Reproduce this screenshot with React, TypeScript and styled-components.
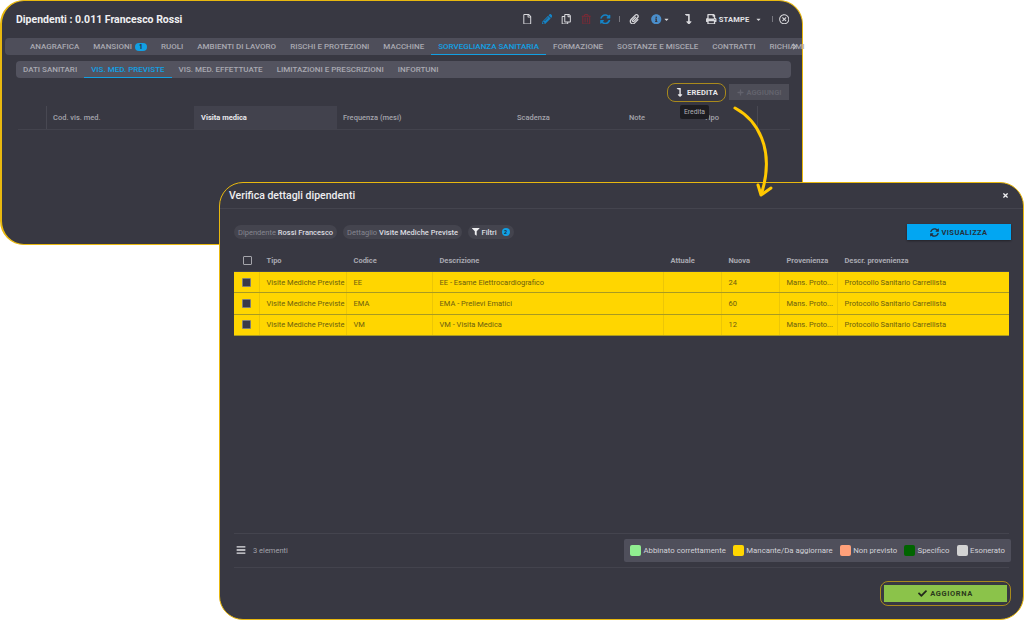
import styled, { createGlobalStyle } from "styled-components";
import {
  FaBars,
  FaCheck,
  FaChevronRight,
  FaFilter,
  FaInfoCircle,
  FaLevelDownAlt,
  FaPaperclip,
  FaPencilAlt,
  FaPlus,
  FaPrint,
  FaRegCopy,
  FaRegFile,
  FaRegTimesCircle,
  FaRegTrashAlt,
  FaSyncAlt,
  FaTimes,
  FaCaretDown,
} from "react-icons/fa";

const GlobalStyle = createGlobalStyle`
  html, body { margin: 0; padding: 0; background: #fff; }
  body { font-family: Roboto, "Liberation Sans", sans-serif; }
`;

const Page = styled.div`
  position: relative;
  width: 1024px;
  height: 620px;
  overflow: hidden;
  background: #fff;
`;

const Window = styled.div<{ $top: number; $left: number; $width: number; $height: number }>`
  position: absolute;
  top: ${(p) => p.$top}px;
  left: ${(p) => p.$left}px;
  width: ${(p) => p.$width}px;
  height: ${(p) => p.$height}px;
  box-sizing: border-box;
  display: flex;
  flex-direction: column;
  background: #383842;
  border: 1.5px solid #e8b80f;
  border-radius: 24px;
  color: #e4e4e8;
`;

const BackWindow = styled(Window)`
  border-left-width: 2px;
  padding: 0 0 0 3px;
`;

const TitleBar = styled.div`
  height: 36px;
  display: flex;
  align-items: center;
  justify-content: space-between;
  padding: 0 13px 0 11px;
  flex: none;
`;

const WindowTitle = styled.div`
  font-size: 10.5px;
  font-weight: 700;
  color: #f0f0f2;
`;

const Tools = styled.div`
  display: flex;
  align-items: center;
  font-size: 10.5px;
`;

const Tool = styled.span<{ $color?: string; $gap?: number }>`
  display: inline-flex;
  align-items: center;
  color: ${(p) => p.$color || "#d8d8dc"};
  margin-left: ${(p) => p.$gap ?? 9}px;
`;

const ToolSep = styled.span<{ $gap?: number }>`
  width: 1px;
  height: 6px;
  background: #77777f;
  margin-left: ${(p) => p.$gap ?? 9}px;
`;

const PrintLabel = styled.span`
  font-size: 7.5px;
  font-weight: 700;
  letter-spacing: 0.2px;
  margin-left: 2px;
  color: #e2e2e6;
`;

const Tabs = styled.div`
  flex: none;
  height: 17px;
  margin-top: 1px;
  display: flex;
  align-items: center;
  background: #4e4e5a;
  border-radius: 4px 0 0 4px;
  padding-left: 25px;
  gap: 14px;
  position: relative;
`;

const Tab = styled.div<{ $active?: boolean }>`
  height: 100%;
  display: flex;
  align-items: center;
  gap: 3px;
  font-size: 8px;
  font-weight: 500;
  white-space: nowrap;
  color: ${(p) => (p.$active ? "#11a0e4" : "#a9a9b1")};
  margin: 0 ${(p) => (p.$active ? "-7px" : "0")};
  padding: 0 ${(p) => (p.$active ? "7px" : "0")};
  box-shadow: ${(p) => (p.$active ? "inset 0 -1px 0 #11a0e4" : "none")};
`;

const Badge = styled.span`
  display: inline-flex;
  align-items: center;
  justify-content: center;
  width: 12px;
  height: 8px;
  border-radius: 4px;
  background: #11a0e4;
  color: #1b2a38;
  font-size: 6.5px;
  font-weight: 700;
`;

const TabMore = styled.span`
  position: absolute;
  right: 4px;
  top: 5px;
  font-size: 7px;
  color: #b5b5bb;
  display: flex;
`;

const SubTabs = styled.div`
  flex: none;
  height: 17px;
  margin: 6px 11px 0 11px;
  display: flex;
  align-items: center;
  background: #53535f;
  border-radius: 4px;
  padding-left: 7px;
  gap: 14px;
`;

const Actions = styled.div`
  flex: none;
  height: 24px;
  margin-top: 2px;
  display: flex;
  align-items: center;
  justify-content: flex-end;
  padding-right: 13px;
  gap: 3px;
`;

const InheritButton = styled.div`
  width: 59px;
  height: 19px;
  box-sizing: border-box;
  border: 1px solid #a98a1c;
  border-radius: 8px;
  display: flex;
  align-items: center;
  justify-content: center;
  gap: 3px;
  font-size: 7.5px;
  font-weight: 700;
  letter-spacing: 0.2px;
  color: #e8e8ea;
`;

const AddButton = styled.div`
  width: 60px;
  height: 16px;
  background: #4d4d57;
  display: flex;
  align-items: center;
  justify-content: center;
  gap: 3px;
  font-size: 7.5px;
  font-weight: 700;
  color: #62626c;
`;

const BackHead = styled.div`
  flex: none;
  margin: 2px 12px 0 13px;
  height: 23px;
  display: grid;
  grid-template-columns: 29px 147px 143px 174px 112px 75px 60px 1fr;
  border-bottom: 1px solid #43434d;
`;

const BackCell = styled.div<{ $selected?: boolean; $line?: boolean }>`
  display: flex;
  align-items: center;
  padding-left: ${(p) => (p.$selected ? 7 : 6)}px;
  font-size: 7.5px;
  font-weight: ${(p) => (p.$selected ? 700 : 500)};
  color: ${(p) => (p.$selected ? "#e8e8ec" : "#a4a4ac")};
  background: ${(p) => (p.$selected ? "#42424d" : "transparent")};
  border-right: ${(p) => (p.$line ? "1px solid #484852" : "none")};
`;

const Tooltip = styled.div`
  position: absolute;
  left: 680px;
  top: 105px;
  width: 29px;
  height: 14px;
  display: flex;
  align-items: center;
  justify-content: center;
  background: #1d1d22;
  border-radius: 2px;
  color: #b0b0b6;
  font-size: 6.8px;
`;

const DialogHead = styled.div`
  flex: none;
  height: 25px;
  display: flex;
  align-items: center;
  justify-content: space-between;
  padding: 0 14px 0 9px;
  border-bottom: 1px solid #44444e;
`;

const DialogTitle = styled.div`
  font-size: 10.5px;
  font-weight: 500;
  color: #eeeef0;
`;

const CloseIcon = styled.span`
  display: flex;
  font-size: 7px;
  color: #f2f2f4;
`;

const DialogBody = styled.div`
  flex: 1;
  display: flex;
  flex-direction: column;
  padding: 15px 12px 0 14px;
`;

const FilterRow = styled.div`
  flex: none;
  height: 16px;
  display: flex;
  align-items: center;
  gap: 6px;
`;

const Chip = styled.div`
  height: 14px;
  display: flex;
  align-items: center;
  gap: 2px;
  padding: 0 4px;
  border-radius: 7px;
  background: #44444e;
  font-size: 7.5px;
  color: #85858f;
  white-space: nowrap;
`;

const ChipValue = styled.span`
  color: #dcdce0;
  font-weight: 500;
`;

const FilterIcon = styled.span`
  display: flex;
  color: #eeeef0;
  font-size: 7.5px;
`;

const ChipBadge = styled(Badge)`
  width: 8px;
  margin-left: 3px;
  font-size: 5.5px;
`;

const ViewButton = styled.div`
  margin-left: auto;
  width: 104px;
  height: 16px;
  display: flex;
  align-items: center;
  justify-content: center;
  gap: 2px;
  background: #02a6f2;
  color: #24303e;
  font-size: 7.5px;
  font-weight: 700;
  letter-spacing: 0.4px;
  box-shadow: 0 1px 2px rgba(0, 0, 0, 0.4);
`;

const Table = styled.div`
  flex: none;
  height: 285px;
  margin-top: 9px;
  border-bottom: 1px solid #44444e;
  margin-right: 2px;
  box-sizing: border-box;
`;

const Row = styled.div<{ $head?: boolean }>`
  display: grid;
  grid-template-columns: 26px 87px 86px 231px 58px 58px 58px 1fr;
  height: ${(p) => (p.$head ? 23 : 21.3)}px;
  box-sizing: border-box;
  background: ${(p) => (p.$head ? "transparent" : "#ffd600")};
  border-bottom: ${(p) => (p.$head ? "1px solid #474751" : "1px solid #a89a22")};
`;

const Cell = styled.div<{ $head?: boolean }>`
  display: flex;
  align-items: center;
  padding-left: 6.5px;
  font-size: 7.5px;
  font-weight: ${(p) => (p.$head ? 700 : 400)};
  color: ${(p) => (p.$head ? "#a9a9b1" : "#6b5d10")};
  border-right: ${(p) => (p.$head ? "none" : "1px solid #ecc606")};
  white-space: nowrap;
  overflow: hidden;

  &:last-child {
    border-right: none;
  }
`;

const CheckCell = styled(Cell)`
  justify-content: center;
  padding-left: 0;
`;

const Check = styled.span<{ $checked?: boolean }>`
  width: 9px;
  height: 9px;
  box-sizing: border-box;
  border-radius: 1px;
  border: 1px solid ${(p) => (p.$checked ? "#7d7d7a" : "#a5a5ab")};
  background: ${(p) => (p.$checked ? "#3a3a48" : "transparent")};
`;

const Footer = styled.div`
  flex: none;
  height: 34px;
  display: flex;
  align-items: center;
  justify-content: space-between;
  border-bottom: 1px solid #43434d;
  margin-right: 2px;
  box-sizing: border-box;
`;

const Count = styled.div`
  display: flex;
  align-items: center;
  gap: 7px;
  padding-left: 2px;
  margin-top: -1px;
  font-size: 7.5px;
  color: #a2a2a9;
`;

const CountIcon = styled.span`
  display: flex;
  font-size: 10px;
  color: #e2e2e6;
`;

const Legend = styled.div`
  width: 387px;
  height: 23px;
  box-sizing: border-box;
  display: flex;
  align-items: center;
  justify-content: space-between;
  padding: 0 6px;
  background: #4f4f5b;
  border-radius: 2px;
  margin-right: -2px;
`;

const LegendItem = styled.div`
  display: flex;
  align-items: center;
  gap: 2.5px;
  font-size: 7.8px;
  color: #d2d2d8;
  white-space: nowrap;
`;

const Swatch = styled.span<{ $color: string }>`
  width: 11px;
  height: 11px;
  border-radius: 2px;
  background: ${(p) => p.$color};
`;

const DialogActions = styled.div`
  flex: 1;
  display: flex;
  justify-content: flex-end;
  padding-top: 13px;
`;

const SaveRing = styled.div`
  width: 131px;
  height: 25px;
  box-sizing: border-box;
  border: 1px solid #a98a1c;
  border-radius: 8px;
  display: flex;
  align-items: center;
  justify-content: center;
`;

const SaveButton = styled.div`
  width: 123px;
  height: 17px;
  display: flex;
  align-items: center;
  justify-content: center;
  gap: 3px;
  background: #8bc34a;
  color: #2c3a1c;
  font-size: 7.5px;
  font-weight: 700;
  letter-spacing: 0.6px;
`;

const SaveIcon = styled.span`
  display: flex;
  font-size: 9px;
  color: #23281c;
`;

const Arrow = styled.svg`
  position: absolute;
  left: 725px;
  top: 100px;
`;

const mainTabs = [
  "ANAGRAFICA",
  "MANSIONI",
  "RUOLI",
  "AMBIENTI DI LAVORO",
  "RISCHI E PROTEZIONI",
  "MACCHINE",
  "SORVEGLIANZA SANITARIA",
  "FORMAZIONE",
  "SOSTANZE E MISCELE",
  "CONTRATTI",
  "RICHIAMI",
];

const subTabs = [
  "DATI SANITARI",
  "VIS. MED. PREVISTE",
  "VIS. MED. EFFETTUATE",
  "LIMITAZIONI E PRESCRIZIONI",
  "INFORTUNI",
];

const backColumns = ["", "Cod. vis. med.", "Visita medica", "Frequenza (mesi)", "Scadenza", "Note", "Tipo", ""];

const columns = ["Tipo", "Codice", "Descrizione", "Attuale", "Nuova", "Provenienza", "Descr. provenienza"];

const rows = [
  { code: "EE", desc: "EE - Esame Elettrocardiografico", next: "24" },
  { code: "EMA", desc: "EMA - Prelievi Ematici", next: "60" },
  { code: "VM", desc: "VM - Visita Medica", next: "12" },
];

const legend = [
  { color: "#90ee90", label: "Abbinato correttamente" },
  { color: "#ffd600", label: "Mancante/Da aggiornare" },
  { color: "#ffa07a", label: "Non previsto" },
  { color: "#006400", label: "Specifico" },
  { color: "#d3d3d3", label: "Esonerato" },
];

export default function App() {
  return (
    <Page>
      <GlobalStyle />
      <BackWindow $top={0} $left={0} $width={803} $height={245}>
        <TitleBar>
          <WindowTitle>Dipendenti : 0.011 Francesco Rossi</WindowTitle>
          <Tools>
            <Tool><FaRegFile /></Tool>
            <Tool $color="#1583c5"><FaPencilAlt /></Tool>
            <Tool><FaRegCopy /></Tool>
            <Tool $color="#7c2a36"><FaRegTrashAlt /></Tool>
            <Tool $color="#1583c5"><FaSyncAlt /></Tool>
            <ToolSep $gap={8} />
            <Tool><FaPaperclip /></Tool>
            <Tool $color="#4a8ecb" $gap={12}><FaInfoCircle /></Tool>
            <Tool $gap={1}><FaCaretDown size={7} /></Tool>
            <Tool $gap={13}><FaLevelDownAlt /></Tool>
            <Tool $gap={13}><FaPrint /><PrintLabel>STAMPE</PrintLabel></Tool>
            <Tool $gap={5}><FaCaretDown size={7} /></Tool>
            <ToolSep $gap={10} />
            <Tool $gap={6}><FaRegTimesCircle /></Tool>
          </Tools>
        </TitleBar>
        <Tabs>
          {mainTabs.map((t) => (
            <Tab key={t} $active={t === "SORVEGLIANZA SANITARIA"}>
              {t}
              {t === "MANSIONI" && <Badge>1</Badge>}
            </Tab>
          ))}
          <TabMore><FaChevronRight /></TabMore>
        </Tabs>
        <SubTabs>
          {subTabs.map((t) => (
            <Tab key={t} $active={t === "VIS. MED. PREVISTE"}>{t}</Tab>
          ))}
        </SubTabs>
        <Actions>
          <InheritButton><FaLevelDownAlt size={9} />EREDITA</InheritButton>
          <AddButton><FaPlus size={7} />AGGIUNGI</AddButton>
        </Actions>
        <BackHead>
          {backColumns.map((c, i) => (
            <BackCell key={i} $selected={c === "Visita medica"} $line={i === 0 || i === 6}>{c}</BackCell>
          ))}
        </BackHead>
      </BackWindow>
      <Tooltip>Eredita</Tooltip>

      <Window $top={182} $left={219} $width={805} $height={438}>
        <DialogHead>
          <DialogTitle>Verifica dettagli dipendenti</DialogTitle>
          <CloseIcon><FaTimes /></CloseIcon>
        </DialogHead>
        <DialogBody>
          <FilterRow>
            <Chip>Dipendente <ChipValue>Rossi Francesco</ChipValue></Chip>
            <Chip>Dettaglio <ChipValue>Visite Mediche Previste</ChipValue></Chip>
            <Chip>
              <FilterIcon><FaFilter /></FilterIcon>
              <ChipValue>Filtri</ChipValue>
              <ChipBadge>2</ChipBadge>
            </Chip>
            <ViewButton><FaSyncAlt size={9} />VISUALIZZA</ViewButton>
          </FilterRow>
          <Table>
            <Row $head>
              <CheckCell $head><Check /></CheckCell>
              {columns.map((c) => (
                <Cell key={c} $head>{c}</Cell>
              ))}
            </Row>
            {rows.map((r) => (
              <Row key={r.code}>
                <CheckCell><Check $checked /></CheckCell>
                <Cell>Visite Mediche Previste</Cell>
                <Cell>{r.code}</Cell>
                <Cell>{r.desc}</Cell>
                <Cell />
                <Cell>{r.next}</Cell>
                <Cell>Mans. Proto...</Cell>
                <Cell>Protocollo Sanitario Carrellista</Cell>
              </Row>
            ))}
          </Table>
          <Footer>
            <Count>
              <CountIcon><FaBars /></CountIcon>
              3 elementi
            </Count>
            <Legend>
              {legend.map((l) => (
                <LegendItem key={l.label}>
                  <Swatch $color={l.color} />
                  {l.label}
                </LegendItem>
              ))}
            </Legend>
          </Footer>
          <DialogActions>
            <SaveRing>
              <SaveButton>
                <SaveIcon><FaCheck /></SaveIcon>
                AGGIORNA
              </SaveButton>
            </SaveRing>
          </DialogActions>
        </DialogBody>
      </Window>

      <Arrow width="60" height="105" viewBox="0 0 60 105" fill="none">
        <path d="M10 8 C32 20 50 48 37 92" stroke="#ffc800" strokeWidth="3" strokeLinecap="round" />
        <path d="M33 85 L36 95 L46 88" stroke="#ffc800" strokeWidth="3" strokeLinecap="round" strokeLinejoin="round" />
      </Arrow>
    </Page>
  );
}
